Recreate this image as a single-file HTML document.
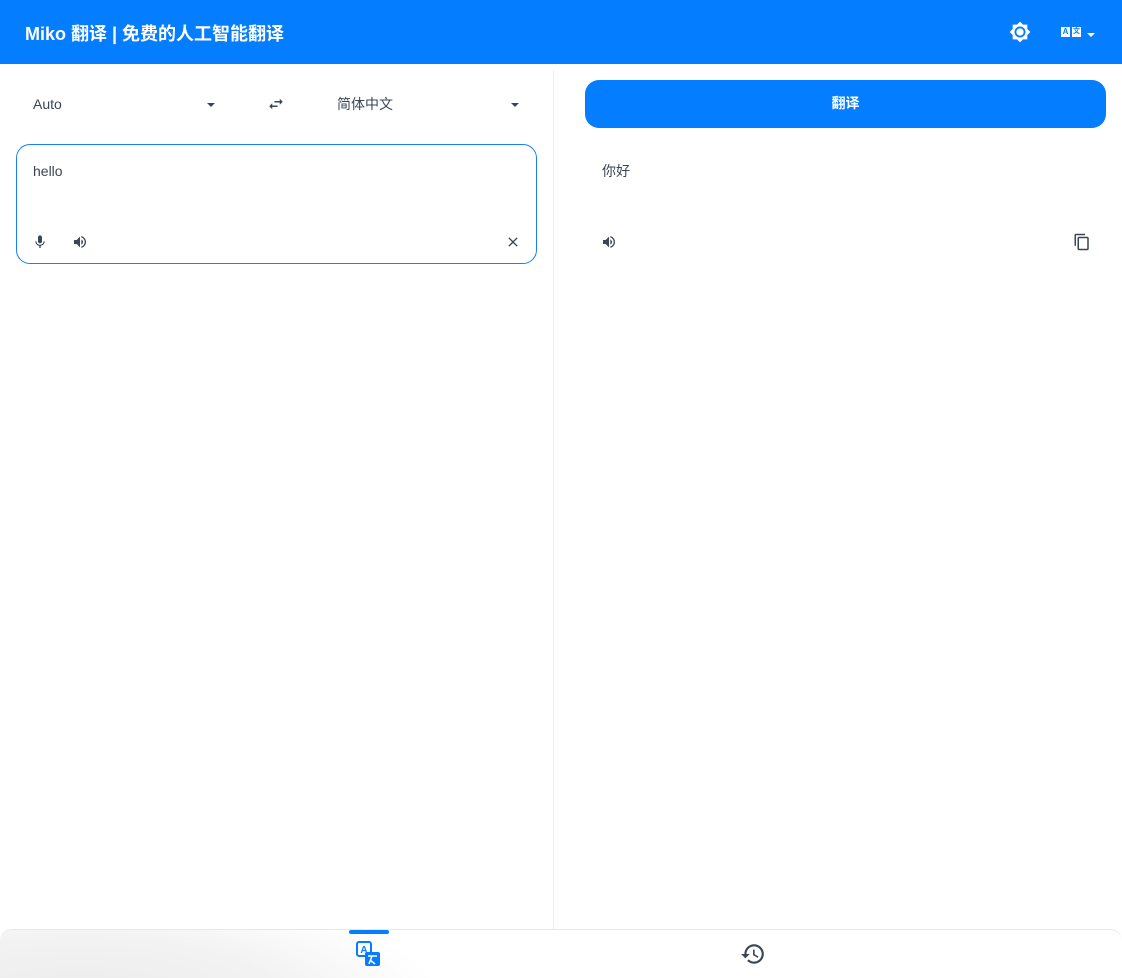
<!DOCTYPE html>
<html><head><meta charset="utf-8"><style>
*{box-sizing:border-box;margin:0;padding:0}
body{width:1122px;height:978px;overflow:hidden;background:#fff;font-family:"Liberation Sans","Noto Sans CJK SC",sans-serif;color:#3a4556;position:relative}
.hdr{position:absolute;left:0;top:0;width:1122px;height:64px;background:#057dff;color:#fff}
.title{position:absolute;left:25px;top:20px;font-size:18px;font-weight:bold}
.abs{position:absolute}
.t{font-size:14px;color:#3a4556}
.div{position:absolute;left:553px;top:70px;width:1px;height:860px;background:#eee}
.box{position:absolute;left:16px;top:144px;width:521px;height:120px;border:1px solid #1a7ff5;border-radius:14px}
.btn{position:absolute;left:585px;top:80px;width:521px;height:48px;background:#057dff;border-radius:14px;color:#fff;font-size:14px;font-weight:bold;text-align:center;line-height:46px}
.nav{position:absolute;left:0;top:929px;width:1122px;height:49px;border-top:1px solid #e8e8e8;border-radius:12px 12px 0 0;background:radial-gradient(ellipse 360px 110px at 80px 70px,#ececec,#f2f2f2 55%,#fff 100%)}
.tri{width:0;height:0;border-left:4px solid transparent;border-right:4px solid transparent;border-top:4px solid #3a4556}
</style></head><body>
<div class="hdr"><div class="title">Miko 翻译 | 免费的人工智能翻译</div>
<svg class="abs" style="left:1009px;top:21px" width="22" height="22" viewBox="0 0 24 24"><path fill="#fff" fill-rule="evenodd" d="M20 8.69V4h-4.69L12 .69 8.69 4H4v4.69L.69 12 4 15.31V20h4.69L12 23.31 15.31 20H20v-4.69L23.31 12 20 8.69zM12 18c-3.31 0-6-2.69-6-6s2.69-6 6-6 6 2.69 6 6-2.69 6-6 6z"/><circle cx="12" cy="12" r="4" fill="#fff"/></svg>
<div class="abs" style="left:1061px;top:27px;width:9px;height:10px;background:#fff;color:#057dff;font-size:8px;font-weight:bold;text-align:center;line-height:10px">A</div>
<div class="abs" style="left:1072px;top:27px;width:9px;height:10px;background:#fff;color:#057dff;font-size:7px;font-weight:bold;text-align:center;line-height:10px">文</div>
<div class="abs tri" style="left:1087px;top:33px;border-top-color:#fff"></div>
</div>
<div class="abs t" style="left:33px;top:96px">Auto</div>
<div class="abs tri" style="left:207px;top:103px"></div>
<svg class="abs" style="left:267px;top:95px" width="18" height="18" viewBox="0 0 24 24"><path fill="#3a4556" d="M6.99 11L3 15l3.99 4v-3H14v-2H6.99v-3zM21 9l-3.99-4v3H10v2h7.01v3L21 9z"/></svg>
<div class="abs t" style="left:337px;top:94px">简体中文</div>
<div class="abs tri" style="left:511px;top:103px"></div>
<div class="div"></div>
<div class="box"></div>
<div class="abs t" style="left:33px;top:163px">hello</div>
<svg class="abs" style="left:32px;top:234px" width="16" height="16" viewBox="0 0 24 24"><path fill="#3a4556" d="M12 14c1.66 0 3-1.34 3-3V5c0-1.66-1.34-3-3-3S9 3.34 9 5v6c0 1.66 1.34 3 3 3zm5.3-3c0 3-2.54 5.1-5.3 5.1S6.7 14 6.7 11H5c0 3.41 2.72 6.23 6 6.72V21h2v-3.28c3.28-.48 6-3.3 6-6.72h-1.7z"/></svg>
<svg class="abs" style="left:72px;top:234px" width="16" height="16" viewBox="0 0 24 24"><path fill="#3a4556" d="M3 9v6h4l5 5V4L7 9H3zm13.5 3c0-1.77-1.02-3.29-2.5-4.03v8.05c1.48-.73 2.5-2.25 2.5-4.02zM14 3.23v2.06c2.89.86 5 3.54 5 6.71s-2.11 5.85-5 6.71v2.06c4.01-.91 7-4.49 7-8.77s-2.99-7.86-7-8.77z"/></svg>
<svg class="abs" style="left:505px;top:234px" width="16" height="16" viewBox="0 0 24 24"><path fill="#3a4556" d="M19 6.41L17.59 5 12 10.59 6.41 5 5 6.41 10.59 12 5 17.59 6.41 19 12 13.41 17.59 19 19 17.59 13.41 12z"/></svg>
<div class="btn">翻译</div>
<div class="abs t" style="left:602px;top:161px">你好</div>
<svg class="abs" style="left:601px;top:234px" width="16" height="16" viewBox="0 0 24 24"><path fill="#3a4556" d="M3 9v6h4l5 5V4L7 9H3zm13.5 3c0-1.77-1.02-3.29-2.5-4.03v8.05c1.48-.73 2.5-2.25 2.5-4.02zM14 3.23v2.06c2.89.86 5 3.54 5 6.71s-2.11 5.850-5 6.71v2.06c4.01-.91 7-4.49 7-8.77s-2.99-7.86-7-8.77z"/></svg>
<svg class="abs" style="left:1073px;top:233px" width="18" height="18" viewBox="0 0 24 24"><path fill="#3a4556" d="M16 1H4c-1.1 0-2 .9-2 2v14h2V3h12V1zm3 4H8c-1.1 0-2 .9-2 2v14c0 1.1.9 2 2 2h11c1.1 0 2-.9 2-2V7c0-1.1-.9-2-2-2zm0 16H8V7h11v14z"/></svg>
<div class="nav"></div>
<div class="abs" style="left:349px;top:930px;width:40px;height:4px;background:#057dff;border-radius:2px"></div>
<svg class="abs" style="left:356px;top:941px" width="26" height="26" viewBox="0 0 26 26"><rect x="1" y="1" width="14" height="14" rx="2" fill="#fff" stroke="#057dff" stroke-width="2"/><text x="8" y="12" font-size="10" font-weight="bold" fill="#057dff" text-anchor="middle" font-family="Liberation Sans">A</text><rect x="9" y="11" width="15" height="14" rx="2" fill="#057dff"/><path d="M12 15h9M16 15l-3 8M14 19l5 4" stroke="#fff" stroke-width="1.5" fill="none"/></svg>
<svg class="abs" style="left:740px;top:941px" width="26" height="26" viewBox="0 0 24 24"><path fill="#3a4556" d="M13 3a9 9 0 0 0-9 9H1l3.89 3.89.07.14L9 12H6c0-3.87 3.13-7 7-7s7 3.13 7 7-3.13 7-7 7c-1.93 0-3.68-.79-4.94-2.06l-1.42 1.42A8.954 8.954 0 0 0 13 21a9 9 0 0 0 0-18zm-1 5v5l4.28 2.54.72-1.21-3.5-2.08V8H12z"/></svg>
</body></html>
